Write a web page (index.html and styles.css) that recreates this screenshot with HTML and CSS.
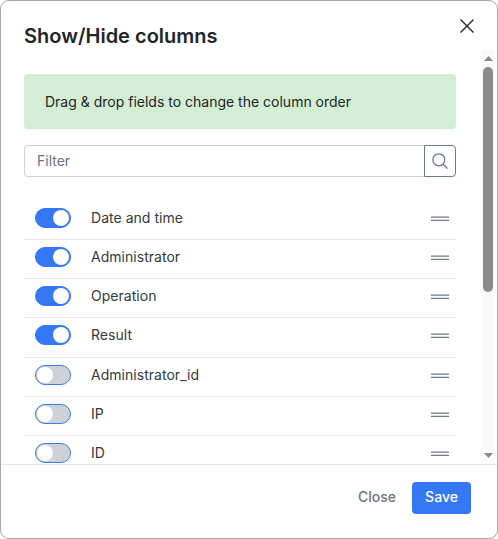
FILE: index.html
```html
<!DOCTYPE html>
<html lang="en">
<head>
<meta charset="utf-8">
<title>Show/Hide columns</title>
<link rel="stylesheet" href="styles.css">
</head>
<body>
<div class="modal">
  <header class="modal-header">
    <h2 class="modal-title">Show/Hide columns</h2>
    <button class="close-x" aria-label="Close">
      <svg width="16" height="16" viewBox="0 0 16 16"><path d="M1.5 1.5l13 13M14.5 1.5l-13 13" stroke="#212529" stroke-width="1.4" fill="none"/></svg>
    </button>
  </header>
  <div class="modal-body">
    <div class="scroll-content">
      <div class="alert">Drag &amp; drop fields to change the column order</div>
      <div class="filter">
        <input class="filter-input" type="text" placeholder="Filter">
        <button class="filter-btn" aria-label="Search">
          <svg width="18" height="18" viewBox="0 0 18 18" fill="none" stroke="#6c7a89" stroke-width="1.3"><circle cx="7.8" cy="7.8" r="6"/><path d="M12.2 12.2l4.3 4.3"/></svg>
        </button>
      </div>
      <ul class="rows">
        <li class="row"><span class="toggle on"></span><span class="label">Date and time</span><svg class="handle" width="18" height="6" viewBox="0 0 18 6"><path d="M0 1.2h18M0 4.4h18"/></svg></li>
        <li class="row"><span class="toggle on"></span><span class="label">Administrator</span><svg class="handle" width="18" height="6" viewBox="0 0 18 6"><path d="M0 1.2h18M0 4.4h18"/></svg></li>
        <li class="row"><span class="toggle on"></span><span class="label">Operation</span><svg class="handle" width="18" height="6" viewBox="0 0 18 6"><path d="M0 1.2h18M0 4.4h18"/></svg></li>
        <li class="row"><span class="toggle on"></span><span class="label">Result</span><svg class="handle" width="18" height="6" viewBox="0 0 18 6"><path d="M0 1.2h18M0 4.4h18"/></svg></li>
        <li class="row"><span class="toggle"></span><span class="label">Administrator_id</span><svg class="handle" width="18" height="6" viewBox="0 0 18 6"><path d="M0 1.2h18M0 4.4h18"/></svg></li>
        <li class="row"><span class="toggle"></span><span class="label">IP</span><svg class="handle" width="18" height="6" viewBox="0 0 18 6"><path d="M0 1.2h18M0 4.4h18"/></svg></li>
        <li class="row"><span class="toggle"></span><span class="label">ID</span><svg class="handle" width="18" height="6" viewBox="0 0 18 6"><path d="M0 1.2h18M0 4.4h18"/></svg></li>
      </ul>
    </div>
    <div class="scrollbar">
      <svg class="arrow" width="9" height="5" viewBox="0 0 9 5"><path d="M4.5 0L9 5H0z" fill="#8a8a8a"/></svg>
      <div class="thumb-track"><div class="thumb"></div></div>
      <svg class="arrow" width="9" height="5" viewBox="0 0 9 5"><path d="M0 0h9L4.5 5z" fill="#8a8a8a"/></svg>
    </div>
  </div>
  <footer class="modal-footer">
    <button class="btn-close">Close</button>
    <button class="btn-save">Save</button>
  </footer>
</div>
</body>
</html>
```
FILE: styles.css
```css
* { box-sizing: border-box; }
html, body { margin: 0; padding: 0; height: 100%; background: #fff; overflow: hidden; }
body { font-family: Inter, "Liberation Sans", sans-serif; color: #212529; }

.modal {
  width: 498px;
  height: 539px;
  border: 1px solid #a9a9a9;
  border-radius: 9px;
  background: #fff;
  display: flex;
  flex-direction: column;
  overflow: hidden;
}

.modal-header {
  height: 49px;
  flex: none;
  display: flex;
  justify-content: space-between;
  padding: 22px 22px 0 23px;
}
.modal-title { margin: 0; font-size: 20px; line-height: 26px; font-weight: 600; color: #212529; }
.close-x {
  border: 0; background: none; padding: 0;
  width: 16px; height: 16px; margin-top: -5px;
  display: flex;
}

.modal-body { position: relative; flex: 1; overflow: hidden; min-height: 0; }
.scroll-content { padding: 24px 41px 0 23px; }

.alert {
  height: 55px;
  background: #d4eed6;
  border-radius: 4px;
  padding-left: 21px;
  display: flex;
  align-items: center;
  font-size: 14px;
  color: #212529;
}

.filter { display: flex; margin-top: 16px; height: 32px; }
.filter-input {
  flex: 1; min-width: 0;
  border: 1px solid #ced4da;
  border-right: 0;
  border-radius: 4px 0 0 4px;
  padding: 0 12px 1px;
  font: 14px Inter, "Liberation Sans", sans-serif;
  color: #212529;
  outline: none;
}
.filter-input::placeholder { color: #6c757d; opacity: 1; }
.filter-btn {
  width: 32px; flex: none;
  border: 1px solid #6c7a89;
  border-radius: 0 4px 4px 0;
  background: #fff;
  padding: 0;
  display: flex; align-items: center; justify-content: center;
}

.rows { list-style: none; margin: 23.8px 0 0; padding: 0; }
.row {
  height: 39.2px;
  display: flex;
  align-items: center;
  padding: 0 7px 4.2px 11px;
  border-bottom: 1px solid #e9ecef;
  font-size: 14px;
}
.label { flex: 1; margin-left: 20px; padding-bottom: 1px; color: #343a40; letter-spacing: 0.03px; }
.handle { flex: none; margin-top: 2px; fill: none; stroke: #6f7c8a; stroke-width: 1.3; }

.toggle {
  position: relative;
  flex: none;
  width: 36px; height: 20px;
  border-radius: 10px;
  border: 1px solid #3b7ddd;
  background: #ced1d6;
}
.toggle::after {
  content: "";
  position: absolute;
  left: 1px; top: 1px;
  width: 16px; height: 16px;
  border-radius: 50%;
  background: #fff;
}
.toggle.on { background: #3478f6; border-color: #3478f6; }
.toggle.on::after { left: 17px; }

.scrollbar {
  position: absolute;
  top: 0; bottom: 0; right: 2px;
  width: 14px;
  background: #fafafa;
  display: flex;
  flex-direction: column;
  align-items: center;
}
.arrow { flex: none; margin: 6px 0; }
.thumb-track { flex: 1; width: 100%; padding: 0 2px; }
.thumb { height: 225px; background: #8c8c8c; border-radius: 5px; }

.modal-footer {
  flex: none;
  height: 74px;
  border-top: 1px solid #e3e6e8;
  display: flex;
  justify-content: flex-end;
  align-items: center;
  padding: 0 26px 8px 0;
  gap: 16px;
}
.btn-close {
  border: 0; background: none; padding: 0 0 2px;
  font: 500 14px Inter, "Liberation Sans", sans-serif;
  color: #6c757d;
}
.btn-save {
  width: 59px; height: 32px;
  border: 0;
  border-radius: 4px;
  padding: 0 0 2px;
  background: #3478f6;
  color: #fff;
  font: 500 14px Inter, "Liberation Sans", sans-serif;
}
```
